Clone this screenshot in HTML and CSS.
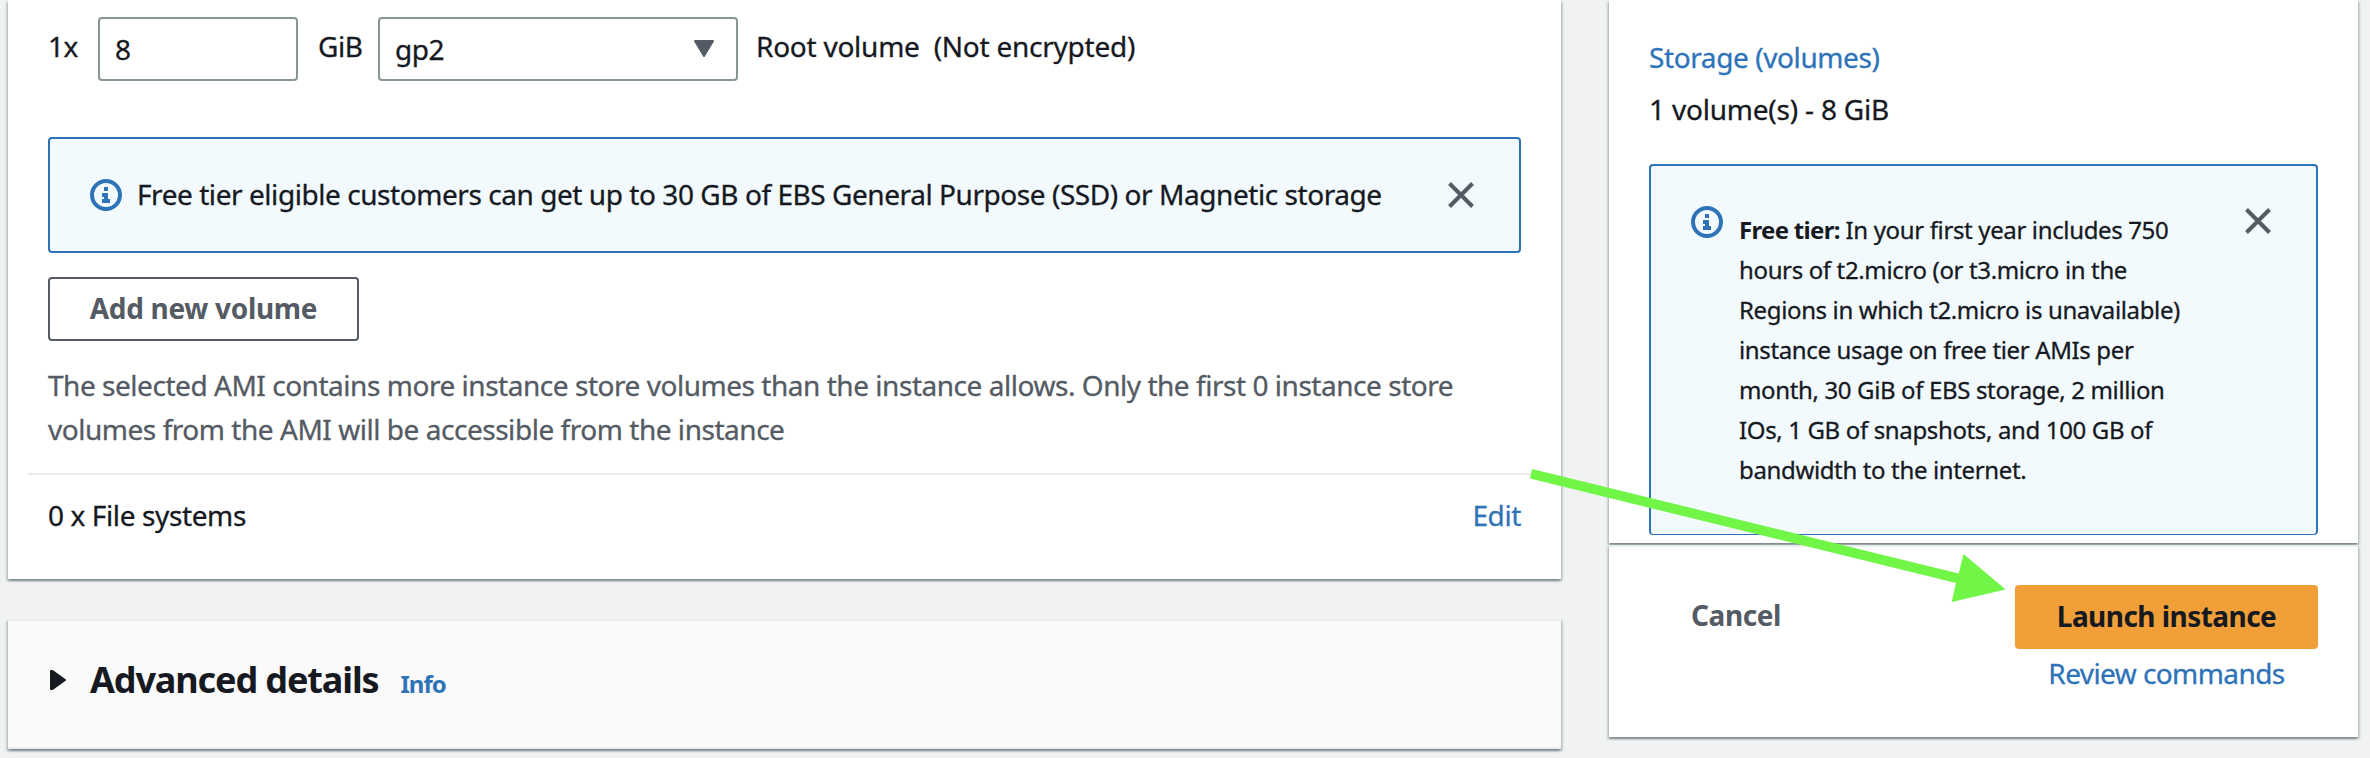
FILE: index.html
```html
<!DOCTYPE html>
<html lang="en">
<head>
<meta charset="utf-8">
<title>Launch an instance</title>
<link rel="stylesheet" href="styles.css">
</head>
<body>
<main class="page">
  <div class="main-column">
    <section class="panel storage">
      <div class="volume-row">
        <span class="row-label count">1x</span>
        <div class="field size-field">8</div>
        <span class="row-label unit">GiB</span>
        <div class="field type-field">
          <span>gp2</span>
          <svg class="caret" width="22" height="18" viewBox="0 0 22 18"><path d="M2 1h18l-9 15z" fill="#545b64" stroke="#545b64" stroke-width="2" stroke-linejoin="round"/></svg>
        </div>
        <span class="row-label root">Root volume&nbsp; (Not encrypted)</span>
      </div>
      <div class="alert wide">
        <svg class="info-icon" width="32" height="32" viewBox="0 0 32 32"><circle cx="16" cy="16" r="14" fill="none" stroke="#2e73b8" stroke-width="4"/><path d="M14 8h4v4h-4zM12 14h6v6h2v4h-8v-4h2v-2h-2z" fill="#2e73b8"/></svg>
        <p class="alert-line">Free tier eligible customers can get up to 30 GB of EBS General Purpose (SSD) or Magnetic storage</p>
        <svg class="close-icon" width="28" height="28" viewBox="0 0 28 28"><path d="M2.500 2.500l23 23M25.500 2.500l-23 23" stroke="#545b64" stroke-width="4"/></svg>
      </div>
      <div class="button outline">Add new volume</div>
      <p class="hint">The selected AMI contains more instance store volumes than the instance allows. Only the first 0 instance store<br>volumes from the AMI will be accessible from the instance</p>
      <div class="files-row"><span>0 x File systems</span><a class="link">Edit</a></div>
    </section>
    <section class="panel advanced">
      <svg class="expander" width="18" height="22" viewBox="0 0 18 22"><path d="M2 2v18h1.500L16 11 3.500 2z" fill="#16191f" stroke="#16191f" stroke-width="2" stroke-linejoin="round"/></svg>
      <h2 class="heading">Advanced details</h2>
      <a class="info-link">Info</a>
    </section>
  </div>
  <aside class="side-column">
    <section class="panel summary">
      <a class="link summary-link">Storage (volumes)</a>
      <p class="summary-value">1 volume(s) - 8 GiB</p>
      <div class="alert tall">
        <svg class="info-icon" width="32" height="32" viewBox="0 0 32 32"><circle cx="16" cy="16" r="14" fill="none" stroke="#2e73b8" stroke-width="4"/><path d="M14 8h4v4h-4zM12 14h6v6h2v4h-8v-4h2v-2h-2z" fill="#2e73b8"/></svg>
        <p class="tier-text"><b>Free tier:</b> In your first year includes 750<br>hours of t2.micro (or t3.micro in the<br>Regions in which t2.micro is unavailable)<br>instance usage on free tier AMIs per<br>month, 30 GiB of EBS storage, 2 million<br>IOs, 1 GB of snapshots, and 100 GB of<br>bandwidth to the internet.</p>
        <svg class="close-icon" width="28" height="28" viewBox="0 0 28 28"><path d="M2.500 2.500l23 23M25.500 2.500l-23 23" stroke="#545b64" stroke-width="4"/></svg>
      </div>
    </section>
    <section class="panel actions">
      <div class="cancel">Cancel</div>
      <div class="launch-group">
        <div class="button primary">Launch instance</div>
        <a class="link review">Review commands</a>
      </div>
    </section>
  </aside>
</main>
<svg class="arrow" width="480" height="140" viewBox="1528 466 480 140"><path d="M1532 469L1958.700 573.400 1963.500 554 2005.700 589.500 1951.700 602 1956 583 1530 478.500z" fill="#71f648"/></svg>
</body>
</html>
```
FILE: styles.css
```css
* { box-sizing: border-box; }
body {
  margin: 0;
  width: 2370px;
  height: 758px;
  overflow: hidden;
  position: relative;
  background: #f1f3f3;
  color: #16191f;
  font: 28px/44px "Noto Sans", sans-serif;
  letter-spacing: -0.43px;
  -webkit-text-stroke: 0.3px;
}
p, h2 { margin: 0; }
b, h2, .button, .cancel, .info-link { -webkit-text-stroke: 0; }
svg { display: block; flex: none; }
.page {
  display: grid;
  grid-template-columns: 1553px 749px;
  column-gap: 48px;
  padding-left: 8px;
  align-items: start;
}
.panel {
  background: #fff;
  box-shadow: 0 2px 2px rgba(0, 28, 36, .3), 2px 2px 2px rgba(0, 28, 36, .15), -2px 2px 2px rgba(0, 28, 36, .15);
}
.main-column { display: flex; flex-direction: column; gap: 40px; }
.storage { height: 579px; padding: 17px 40px 0 40px; white-space: nowrap; }

.volume-row { display: flex; align-items: flex-start; height: 64px; }
.row-label { margin-top: 7px; }
.count { width: 50px; }
.unit { width: 80px; padding-left: 20px; }
.root { padding-left: 18px; letter-spacing: -0.25px; }
.field {
  display: flex;
  align-items: center;
  justify-content: space-between;
  height: 64px;
  border: 2px solid #879596;
  border-radius: 4px;
  padding: 0 21px 0 15px;
}
.size-field { width: 200px; }
.type-field { width: 360px; }

.alert {
  display: flex;
  background: #f2fafd;
  border: 2px solid #2e73b8;
  border-radius: 4px;
}
.wide { margin-top: 56px; height: 116px; align-items: center; padding: 0 44px 0 40px; }
.alert-line { flex: 1; margin: -2px 0 0 15px; letter-spacing: -0.44px; }

.button {
  display: flex;
  align-items: center;
  justify-content: center;
  height: 64px;
  border-radius: 4px;
  font-weight: 700;
}
.outline {
  width: 311px;
  margin-top: 24px;
  padding-bottom: 2px;
  border: 2px solid #545b64;
  color: #545b64;
  letter-spacing: -0.3px;
}
.hint { margin-top: 22px; color: #545b64; letter-spacing: -0.465px; }
.files-row {
  display: flex;
  justify-content: space-between;
  margin: 22px -20px 0;
  padding: 18px 20px 0;
  border-top: 2px solid #eaeaea;
  letter-spacing: -0.38px;
}
.link { color: #2e73b8; }

.advanced {
  display: flex;
  align-items: baseline;
  height: 130px;
  padding: 37px 40px 0 41px;
  background: #fafafa;
  border-top: 2px solid #eaeded;
  border-bottom: 2px solid #eaeded;
}
.expander { align-self: flex-start; margin-top: 11px; }
.heading { margin-left: 23px; font-size: 36px; font-weight: 700; letter-spacing: -1.12px; }
.info-link { margin-left: 22px; font-size: 24px; font-weight: 700; letter-spacing: -1px; color: #2e73b8; }

.side-column { display: flex; flex-direction: column; gap: 2px; }
.summary { height: 543px; padding: 35px 40px 0; }
.summary-link { display: block; letter-spacing: -0.4px; }
.summary-value { margin-top: 8px; letter-spacing: -0.2px; }
.tall { margin-top: 33px; height: 371px; align-items: flex-start; padding: 40px 44px 0 40px; border-bottom-width: 1px; }
.tier-text { flex: 1; margin: 4px 0 0 16px; font-size: 24px; line-height: 40px; letter-spacing: -0.36px; white-space: nowrap; }
.tier-text b { letter-spacing: -0.7px; }
.tall .close-icon { margin-top: 1px; }

.actions {
  display: flex;
  justify-content: space-between;
  height: 192px;
  padding: 38px 40px 0 82px;
  border-top: 2px solid #eaeded;
}
.cancel { margin-top: 8px; font-weight: 700; letter-spacing: -0.4px; color: #545b64; }
.launch-group { display: flex; flex-direction: column; align-items: center; }
.primary { width: 303px; padding-bottom: 2px; background: #f19f38; letter-spacing: -0.55px; }
.review { margin-top: 2px; letter-spacing: -0.58px; }

.arrow { position: absolute; left: 1528px; top: 466px; }
```
